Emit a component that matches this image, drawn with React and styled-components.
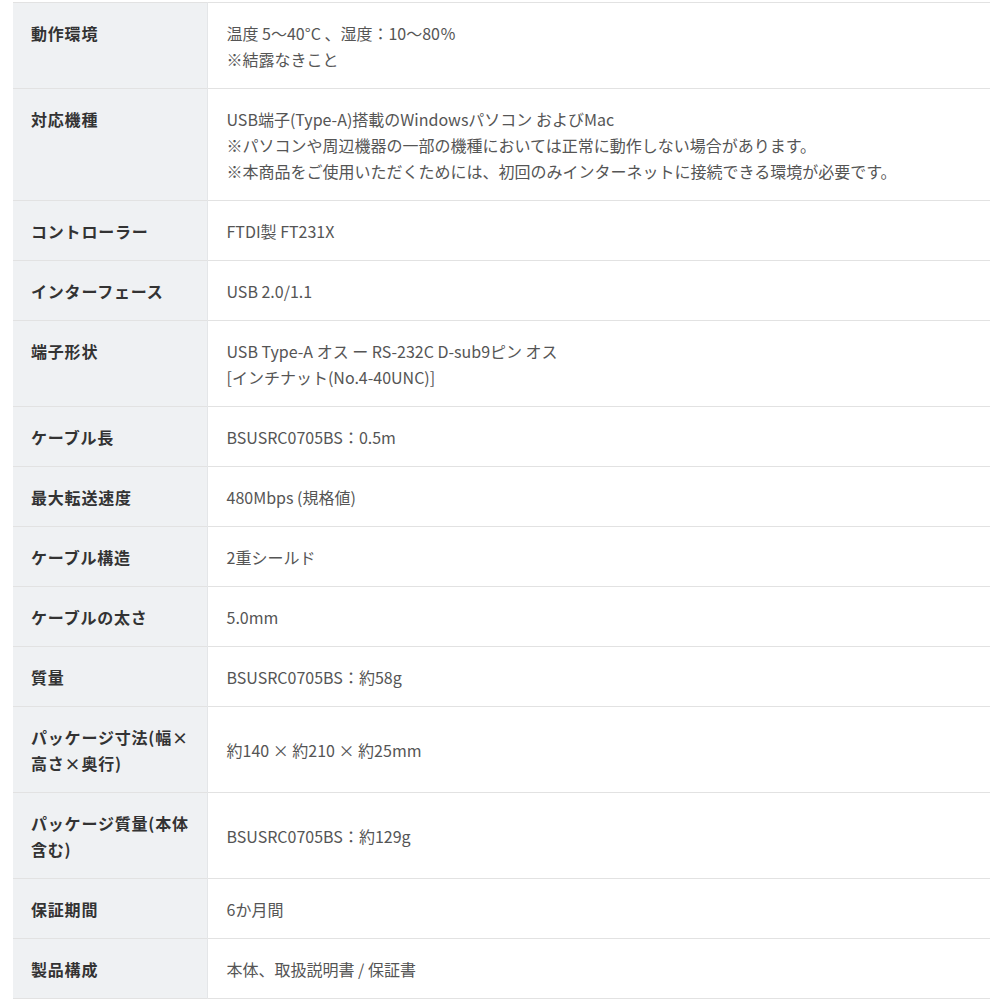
import styled, { createGlobalStyle } from 'styled-components'

const GlobalStyle = createGlobalStyle`
    body {
        margin: 0;
        background: #fff;
        font-family: "Noto Sans CJK JP", "Noto Sans", sans-serif;
    }
`

const specs = [
    ['動作環境', ['温度 5～40°C 、湿度：10～80％', '※結露なきこと']],
    ['対応機種', [
        'USB端子(Type-A)搭載のWindowsパソコン およびMac',
        '※パソコンや周辺機器の一部の機種においては正常に動作しない場合があります。',
        '※本商品をご使用いただくためには、初回のみインターネットに接続できる環境が必要です。',
    ]],
    ['コントローラー', ['FTDI製 FT231X']],
    ['インターフェース', ['USB 2.0/1.1']],
    ['端子形状', ['USB Type-A オス ー RS-232C D-sub9ピン オス', '[インチナット(No.4-40UNC)]']],
    ['ケーブル長', ['BSUSRC0705BS：0.5m']],
    ['最大転送速度', ['480Mbps (規格値)']],
    ['ケーブル構造', ['2重シールド']],
    ['ケーブルの太さ', ['5.0mm']],
    ['質量', ['BSUSRC0705BS：約58g']],
    ['パッケージ寸法(幅×高さ×奥行)', ['約140 × 約210 × 約25mm']],
    ['パッケージ質量(本体含む)', ['BSUSRC0705BS：約129g']],
    ['保証期間', ['6か月間']],
    ['製品構成', ['本体、取扱説明書 / 保証書']],
]

const SpecTable = () => {
    return (
        <Wrapper>
            <GlobalStyle />
            <Table>
                <tbody>
                    {specs.map(([label, lines]) => (
                        <Row key={label}>
                            <Label>{label}</Label>
                            <Value>
                                {lines.map((line) => (
                                    <Line key={line}>{line}</Line>
                                ))}
                            </Value>
                        </Row>
                    ))}
                </tbody>
            </Table>
        </Wrapper>
    )
}

const Wrapper = styled.div`
    padding: 2px 10px 0 13px;
`

const Table = styled.table`
    width: 977px;
    border-collapse: collapse;
    table-layout: fixed;
    font-size: 16px;
    line-height: 26px;
`

const Row = styled.tr`
    border-top: 1px solid #e2e2e2;
    border-bottom: 1px solid #e2e2e2;
`

const Label = styled.th`
    width: 194px;
    box-sizing: border-box;
    background: #eff1f3;
    border-right: 1px solid #e4e6e8;
    color: #333;
    font-weight: bold;
    text-align: left;
    letter-spacing: 0.05em;
    vertical-align: top;
    padding: 17px 8px 16px 18px;
`

const Value = styled.td`
    color: #555;
    vertical-align: middle;
    padding: 17px 19px 16px;
`

const Line = styled.div`
    height: 26px;
    white-space: nowrap;
`

export default SpecTable
